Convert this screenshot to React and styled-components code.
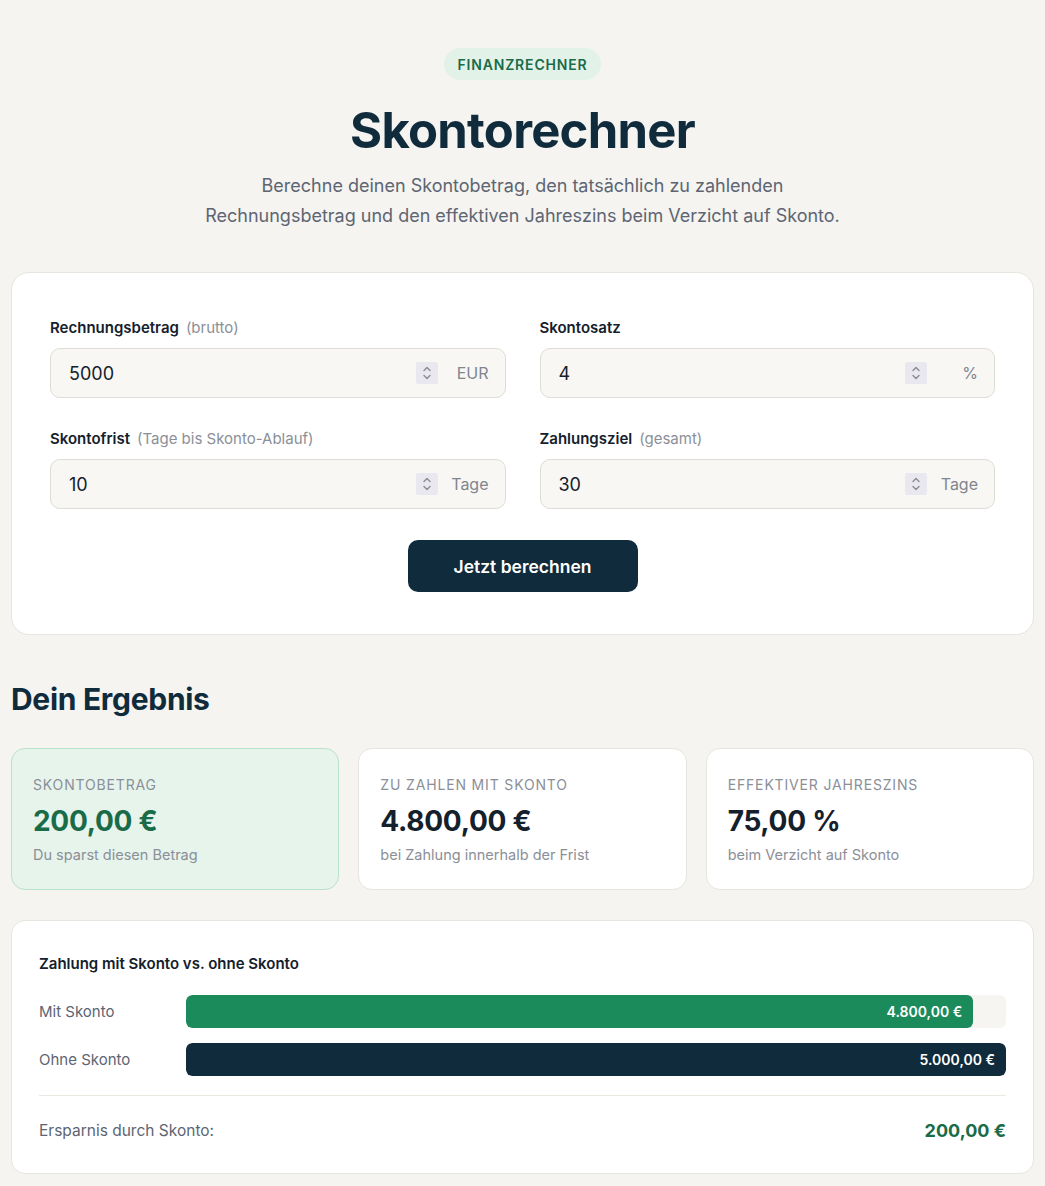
import React from 'react';
import styled, { createGlobalStyle } from 'styled-components';

const GlobalStyle = createGlobalStyle`
  * { box-sizing: border-box; }
  body {
    margin: 0;
    background: #f5f4f0;
    font-family: Inter, "Noto Sans", Arial, sans-serif;
    color: #14202b;
  }
`;

const Page = styled.main`
  max-width: 1045px;
  margin: 0 auto;
  padding: 48px 11px 14px;
`;

const Header = styled.header`
  display: flex;
  flex-direction: column;
  align-items: center;
  text-align: center;
`;

const Pill = styled.span`
  display: inline-flex;
  align-items: center;
  height: 32px;
  padding: 0 13px;
  border-radius: 16px;
  background: #e2f2e9;
  color: #1a6b48;
  font-size: 14px;
  font-weight: 600;
  letter-spacing: 0.06em;
`;

const Title = styled.h1`
  margin: 23px 0 0;
  font-size: 49px;
  line-height: 56px;
  font-weight: 700;
  letter-spacing: -0.015em;
  color: #0f2b3c;
`;

const Lead = styled.p`
  margin: 12px 0 0;
  max-width: 660px;
  font-size: 18px;
  line-height: 30px;
  color: #5d6573;
`;

const Card = styled.section`
  background: #fff;
  border: 1px solid #e7e5df;
  border-radius: 18px;
`;

const FormCard = styled(Card)`
  margin-top: 41px;
  padding: 45px 38px 42px;
`;

const FieldGrid = styled.div`
  display: grid;
  grid-template-columns: 1fr 1fr;
  column-gap: 34px;
  row-gap: 31px;
`;

const Field = styled.label`
  display: flex;
  flex-direction: column;
  gap: 10px;
`;

const LabelText = styled.span`
  font-size: 15px;
  font-weight: 600;
  line-height: 20px;
  color: #14202b;

  small {
    margin-left: 7px;
    font-size: 15px;
    font-weight: 400;
    color: #8b8f98;
  }
`;

const InputBox = styled.div`
  display: flex;
  align-items: center;
  height: 50px;
  padding: 0 16px 0 18px;
  background: #f8f7f4;
  border: 1px solid #dedcd6;
  border-radius: 10px;
`;

const Input = styled.input`
  flex: 1;
  min-width: 0;
  border: 0;
  background: transparent;
  font: inherit;
  font-size: 18px;
  color: #14202b;
  outline: none;
  padding: 0;
  appearance: textfield;

  &::-webkit-inner-spin-button,
  &::-webkit-outer-spin-button {
    -webkit-appearance: none;
    margin: 0;
  }
`;

const Spinner = styled.span`
  display: flex;
  align-items: center;
  justify-content: center;
  width: 22px;
  height: 22px;
  background: #e9e8ee;
  border-radius: 2px;
  color: #8c8a95;
`;

const Unit = styled.span`
  width: ${p => p.$w}px;
  text-align: right;
  font-size: 16px;
  color: #80858f;
`;

const ButtonRow = styled.div`
  display: flex;
  justify-content: center;
  margin-top: 31px;
`;

const PrimaryButton = styled.button`
  width: 230px;
  height: 52px;
  border: 0;
  border-radius: 10px;
  background: #0f2b3c;
  color: #fff;
  font: inherit;
  font-size: 17.5px;
  font-weight: 600;
  cursor: pointer;
`;

const SectionTitle = styled.h2`
  margin: 46px 0 0;
  font-size: 30px;
  line-height: 36px;
  font-weight: 700;
  letter-spacing: -0.01em;
  color: #0f2b3c;
`;

const ResultGrid = styled.div`
  display: grid;
  grid-template-columns: repeat(3, 1fr);
  gap: 19px;
  margin-top: 31px;
`;

const ResultCard = styled.div`
  height: 142px;
  padding: 27px 21px;
  border-radius: 14px;
  background: ${p => (p.$accent ? '#e6f4ec' : '#fff')};
  border: 1px solid ${p => (p.$accent ? '#b9e1cb' : '#e7e5df')};
`;

const ResultLabel = styled.div`
  font-size: 14px;
  line-height: 18px;
  letter-spacing: 0.06em;
  text-transform: uppercase;
  color: #8b8f98;
`;

const ResultValue = styled.div`
  margin-top: 9px;
  font-size: 28px;
  line-height: 36px;
  font-weight: 700;
  letter-spacing: -0.01em;
  color: ${p => (p.$accent ? '#1a6b48' : '#14202b')};
`;

const ResultNote = styled.div`
  margin-top: 6px;
  font-size: 14.5px;
  line-height: 20px;
  color: #8b8f98;
`;

const ChartCard = styled(Card)`
  margin-top: 30px;
  padding: 33px 27px 32px;
  border-radius: 14px;
`;

const ChartTitle = styled.h3`
  margin: 0 0 21px;
  font-size: 15px;
  line-height: 20px;
  font-weight: 600;
  color: #14202b;
`;

const BarRow = styled.div`
  display: grid;
  grid-template-columns: 147px 1fr;
  align-items: center;
  margin-top: ${p => (p.$first ? 0 : '15px')};
`;

const BarLabel = styled.span`
  font-size: 15px;
  color: #5d6573;
`;

const Track = styled.div`
  height: 33px;
  border-radius: 6px;
  background: #f6f5f1;
  overflow: hidden;
`;

const Bar = styled.div`
  height: 100%;
  display: flex;
  align-items: center;
  justify-content: flex-end;
  padding-right: 11px;
  border-radius: 6px;
  background: ${p => p.$color};
  color: #fff;
  font-size: 14px;
  font-weight: 600;
`;

const Divider = styled.hr`
  margin: 19px 0 0;
  border: 0;
  border-top: 1px solid #ebe8e1;
`;

const SavingsRow = styled.div`
  display: flex;
  justify-content: space-between;
  align-items: center;
  margin-top: 24px;
  font-size: 15.5px;
  color: #5d6573;

  strong {
    font-size: 18px;
    font-weight: 700;
    color: #1a6b48;
  }
`;

const SpinIcon = () => (
  <svg width="10" height="16" viewBox="0 0 10 16" fill="none" stroke="currentColor" strokeWidth="1.4" strokeLinecap="round" strokeLinejoin="round">
    <path d="M2 5.5 5 2.5 8 5.5" />
    <path d="M2 10.5 5 13.5 8 10.5" />
  </svg>
);

const fields = [
  { label: 'Rechnungsbetrag', hint: '(brutto)', value: '5000', unit: 'EUR' },
  { label: 'Skontosatz', hint: '', value: '4', unit: '%' },
  { label: 'Skontofrist', hint: '(Tage bis Skonto-Ablauf)', value: '10', unit: 'Tage' },
  { label: 'Zahlungsziel', hint: '(gesamt)', value: '30', unit: 'Tage' },
];

const results = [
  { label: 'Skontobetrag', value: '200,00 €', note: 'Du sparst diesen Betrag', accent: true },
  { label: 'Zu zahlen mit Skonto', value: '4.800,00 €', note: 'bei Zahlung innerhalb der Frist' },
  { label: 'Effektiver Jahreszins', value: '75,00 %', note: 'beim Verzicht auf Skonto' },
];

const bars = [
  { label: 'Mit Skonto', pct: 96, value: '4.800,00 €', color: '#1c8b5c' },
  { label: 'Ohne Skonto', pct: 100, value: '5.000,00 €', color: '#0f2b3c' },
];

export default function App() {
  return (
    <>
      <GlobalStyle />
      <Page>
        <Header>
          <Pill>FINANZRECHNER</Pill>
          <Title>Skontorechner</Title>
          <Lead>
            Berechne deinen Skontobetrag, den tatsächlich zu zahlenden Rechnungsbetrag und den
            effektiven Jahreszins beim Verzicht auf Skonto.
          </Lead>
        </Header>

        <FormCard>
          <FieldGrid>
            {fields.map(f => (
              <Field key={f.label}>
                <LabelText>
                  {f.label}
                  {f.hint && <small>{f.hint}</small>}
                </LabelText>
                <InputBox>
                  <Input type="number" defaultValue={f.value} />
                  <Spinner><SpinIcon /></Spinner>
                  <Unit $w={51}>{f.unit}</Unit>
                </InputBox>
              </Field>
            ))}
          </FieldGrid>
          <ButtonRow>
            <PrimaryButton type="button">Jetzt berechnen</PrimaryButton>
          </ButtonRow>
        </FormCard>

        <SectionTitle>Dein Ergebnis</SectionTitle>
        <ResultGrid>
          {results.map(r => (
            <ResultCard key={r.label} $accent={r.accent}>
              <ResultLabel>{r.label}</ResultLabel>
              <ResultValue $accent={r.accent}>{r.value}</ResultValue>
              <ResultNote>{r.note}</ResultNote>
            </ResultCard>
          ))}
        </ResultGrid>

        <ChartCard>
          <ChartTitle>Zahlung mit Skonto vs. ohne Skonto</ChartTitle>
          {bars.map((b, i) => (
            <BarRow key={b.label} $first={i === 0}>
              <BarLabel>{b.label}</BarLabel>
              <Track>
                <Bar $color={b.color} style={{ width: `${b.pct}%` }}>{b.value}</Bar>
              </Track>
            </BarRow>
          ))}
          <Divider />
          <SavingsRow>
            <span>Ersparnis durch Skonto:</span>
            <strong>200,00 €</strong>
          </SavingsRow>
        </ChartCard>
      </Page>
    </>
  );
}
